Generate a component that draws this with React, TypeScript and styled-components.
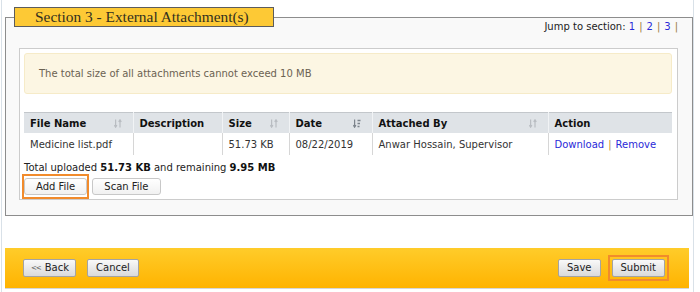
import styled, { createGlobalStyle } from "styled-components";

const GlobalStyle = createGlobalStyle`
  html, body {
    margin: 0;
    padding: 0;
    background: #fff;
  }
  body {
    font-family: "DejaVu Sans", Verdana, sans-serif;
    font-size: 10px;
    color: #222;
  }
`;

const Page = styled.div`
  margin-left: 1px;
  width: 688px;
  min-height: 285px;
  border-left: 1px solid #d9e1e8;
  border-right: 1px solid #d9e1e8;
  padding: 7px 0 0 3px;
  display: flex;
  flex-direction: column;
`;

const Section = styled.fieldset`
  margin: 0;
  padding: 0 0 15px 0;
  min-width: 0;
  border: 1px solid #8d8d8d;
  background: #f9f9f9;
`;

const Legend = styled.legend`
  margin-left: 8px;
  padding: 0 0 0 20px;
  box-sizing: border-box;
  width: 260px;
  height: 20px;
  line-height: 18px;
  border: 1px solid #5c5c5c;
  background: #fdc935;
  font-family: "Liberation Serif", Georgia, serif;
  font-size: 15.4px;
  color: #33301f;
`;

const JumpRow = styled.div`
  margin-top: -7px;
  padding-right: 10px;
  text-align: right;
  line-height: 14px;
  color: #222;
  a {
    color: #2a2ad8;
    text-decoration: none;
  }
  .sep {
    color: #9a7a3c;
    margin: 0 4px;
  }
`;

const InnerBox = styled.div`
  margin: 14px 14px 0 13px;
  border: 1px solid #cccccc;
  background: #fff;
  padding: 4px 5px 4px 4px;
`;

const Alert = styled.div`
  border: 1px solid #f6ebc8;
  border-radius: 3px;
  background: #fcf6e3;
  padding: 12px 14px;
  line-height: 15px;
  color: #6b6252;
`;

const Table = styled.table`
  width: 100%;
  margin-top: 18px;
  border-collapse: collapse;
  table-layout: fixed;
`;

const HeadCell = styled.th`
  height: 20px;
  padding: 0 11px 0 6px;
  background: #dfe3e7;
  border-top: 1px solid #c3c7cb;
  border-right: 1px solid #f1f3f5;
  text-align: left;
  font-weight: bold;
  color: #111;
  &:last-child {
    border-right: none;
  }
`;

const HeadInner = styled.div`
  display: flex;
  align-items: center;
  justify-content: space-between;
`;

const Cell = styled.td`
  height: 21px;
  padding: 1px 6px 0;
  border-right: 1px solid #d6d6d6;
  color: #333;
  white-space: nowrap;
  &:last-child {
    border-right: none;
  }
  a {
    color: #2a2ad8;
    text-decoration: none;
  }
  .sep {
    color: #c09030;
    margin: 0 4px;
  }
`;

const TotalLine = styled.div`
  margin-top: 6px;
  line-height: 14px;
  color: #222;
  b {
    color: #111;
  }
`;

const ButtonRow = styled.div`
  display: flex;
  gap: 5px;
  margin-top: 3px;
`;

const Highlightable = styled.button<{ $highlight?: boolean }>`
  position: relative;
  box-sizing: border-box;
  font-family: "DejaVu Sans", Verdana, sans-serif;
  font-size: 10px;
  color: #222;
  cursor: pointer;
  ${(p) =>
    p.$highlight
      ? `&::after {
    content: "";
    position: absolute;
    top: -5px;
    bottom: -5px;
    left: -3px;
    right: -3px;
    border: 2px solid #f18b2c;
    pointer-events: none;
  }`
      : ""}
`;

const TableButton = styled(Highlightable)`
  height: 17px;
  padding: 0 11px;
  line-height: 15px;
  border: 1px solid #c8c8c8;
  border-radius: 3px;
  background: linear-gradient(#ffffff, #f1f1f1);
`;

const Footer = styled.div`
  margin: 32px 4px 0 0;
  height: 40px;
  padding: 0 24px 0 18px;
  display: flex;
  align-items: center;
  gap: 11px;
  background: linear-gradient(#ffcc2a, #ffb300);
  border-bottom: 1px solid #d6d6d6;
`;

const FooterButton = styled(Highlightable)`
  height: 18px;
  padding: 0 8px;
  line-height: 16px;
  border: 1px solid #a3a3a3;
  border-radius: 2px;
  background: linear-gradient(#f9f9f9, #dadada);
  &::after {
    left: -5px;
    right: -5px;
  }
`;

const BackButton = styled(FooterButton)`
  padding: 0 6px 0 7px;
  display: flex;
  align-items: center;
  gap: 4px;
`;

const Chevrons = styled.span`
  font-size: 7px;
  color: #555;
  letter-spacing: -1px;
`;

const Spacer = styled.div`
  flex: 1;
`;

const SortIcon = ({ active }: { active?: boolean }) => {
  const c = active ? "#7c838b" : "#b9bdc2";
  return (
    <svg width="8" height="9" viewBox="0 0 8 9" fill="none" stroke={c} strokeWidth="1.2">
      <path d="M1.6 0.5V8 M0.3 6.2L1.6 8.2 2.9 6.2" />
      {active ? (
        <path d="M4.5 1.5h3 M4.5 4.5h2.5 M4.5 7.5h2" strokeWidth="1.4" />
      ) : (
        <path d="M6 8.5V1 M4.7 2.8L6 0.8 7.3 2.8" />
      )}
    </svg>
  );
};

const columns = [
  { label: "File Name", width: 109, sort: true },
  { label: "Description", width: 89 },
  { label: "Size", width: 67, sort: true },
  { label: "Date", width: 83, sort: true, active: true },
  { label: "Attached By", width: 176, sort: true },
  { label: "Action", width: 124 },
];

export default function App() {
  return (
    <>
      <GlobalStyle />
      <Page>
        <Section>
          <Legend>Section 3 - External Attachment(s)</Legend>
          <JumpRow>
            Jump to section: <a href="#s1">1</a>
            <span className="sep">|</span>
            <a href="#s2">2</a>
            <span className="sep">|</span>
            <a href="#s3">3</a>
            <span className="sep">|</span>
          </JumpRow>
          <InnerBox>
            <Alert>The total size of all attachments cannot exceed 10 MB</Alert>
            <Table>
              <colgroup>
                {columns.map((c) => (
                  <col key={c.label} style={{ width: c.width }} />
                ))}
              </colgroup>
              <thead>
                <tr>
                  {columns.map((c) => (
                    <HeadCell key={c.label}>
                      <HeadInner>
                        <span>{c.label}</span>
                        {c.sort && <SortIcon active={c.active} />}
                      </HeadInner>
                    </HeadCell>
                  ))}
                </tr>
              </thead>
              <tbody>
                <tr>
                  <Cell>Medicine list.pdf</Cell>
                  <Cell></Cell>
                  <Cell>51.73 KB</Cell>
                  <Cell>08/22/2019</Cell>
                  <Cell>Anwar Hossain, Supervisor</Cell>
                  <Cell>
                    <a href="#download">Download</a>
                    <span className="sep">|</span>
                    <a href="#remove">Remove</a>
                  </Cell>
                </tr>
              </tbody>
            </Table>
            <TotalLine>
              Total uploaded <b>51.73 KB</b> and remaining <b>9.95 MB</b>
            </TotalLine>
            <ButtonRow>
              <TableButton $highlight>Add File</TableButton>
              <TableButton>Scan File</TableButton>
            </ButtonRow>
          </InnerBox>
        </Section>
        <Footer>
          <BackButton>
            <Chevrons>&lt;&lt;</Chevrons>
            <span>Back</span>
          </BackButton>
          <FooterButton>Cancel</FooterButton>
          <Spacer />
          <FooterButton>Save</FooterButton>
          <FooterButton $highlight>Submit</FooterButton>
        </Footer>
      </Page>
    </>
  );
}
